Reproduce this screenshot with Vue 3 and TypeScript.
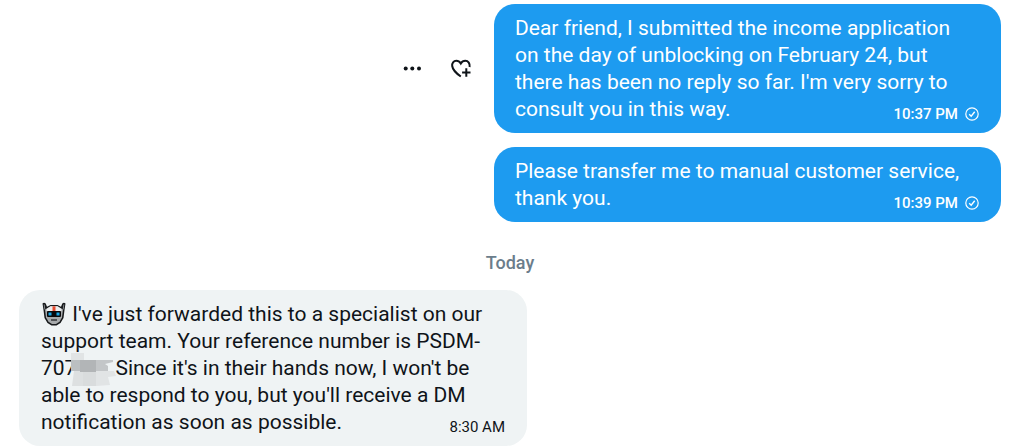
<script setup lang="ts">
interface Message {
  id: number
  lines: string[]
  time: string
  actions: boolean
}

const sent: Message[] = [
  {
    id: 1,
    lines: [
      'Dear friend, I submitted the income application',
      'on the day of unblocking on February 24, but',
      "there has been no reply so far. I'm very sorry to",
      'consult you in this way.',
    ],
    time: '10:37 PM',
    actions: true,
  },
  {
    id: 2,
    lines: ['Please transfer me to manual customer service,', 'thank you.'],
    time: '10:39 PM',
    actions: false,
  },
]
</script>

<template>
  <main class="chat">
    <div v-for="message in sent" :key="message.id" class="row sent">
      <div v-if="message.actions" class="actions">
        <button type="button" aria-label="More">
          <svg width="22" height="22" viewBox="0 0 22 22" fill="currentColor">
            <circle cx="4.7" cy="10.5" r="2" />
            <circle cx="11.3" cy="10.5" r="2" />
            <circle cx="18" cy="10.5" r="2" />
          </svg>
        </button>
        <button type="button" aria-label="Add reaction">
          <svg width="22" height="22" viewBox="0 0 22 22" fill="none" stroke="currentColor" stroke-width="2">
            <path d="M19.6 9C20.2 5.500 18.200 2.800 15.300 2.800c-2 0-3.500 1-4.500 2.800C9.700 3.800 8.300 2.800 6.300 2.800 3.600 2.800 1.800 5 2.200 8c.5 3.800 3.500 6.900 8.600 10.500" />
            <path d="M16.300 10.300v8.400M12.100 14.500h8.400" />
          </svg>
        </button>
      </div>
      <article class="bubble blue">
        <p><span v-for="line in message.lines" :key="line" class="line">{{ line }}</span></p>
        <footer>
          <time>{{ message.time }}</time>
          <svg class="check" width="14" height="14" viewBox="0 0 14 14" fill="none" stroke="currentColor" stroke-width="1.2">
            <circle cx="7" cy="7" r="6.2" />
            <path d="M4.2 7.2l2 2 3.5-4.4" stroke-width="1.4" />
          </svg>
        </footer>
      </article>
    </div>

    <h2 class="day">Today</h2>

    <div class="row">
      <article class="bubble grey">
        <p>
          <span class="line"><svg class="robot" width="24" height="24" viewBox="0 0 24 24" role="img" aria-label="Robot">
            <path d="M.5 1.500Q2 0 3.700 1.500L5 4.700 8.500 3h7L19 4.700 20.300 1.500Q22 0 23.500 1.500L22.500 8 21.500 16 18.500 21 14.500 23.500h-5L5.500 21 2.500 16 1.500 8z" fill="#17191b" />
            <path d="M3 7.500L8.500 4.300h7L21 7.500 20 15.500l-2.500 4.300-3.500 2.300h-4l-3.500-2.300L4 15.500z" fill="#a6a9ab" />
            <path d="M4.500 7L8.500 4.300h7L19.500 7v2h-15z" fill="#eceeef" />
            <path d="M10.500 4.300h3V9h-3z" fill="#e84c30" />
            <rect x="5" y="9" width="14" height="6" rx="1" fill="#08090a" />
            <path d="M6.500 10.500h3v3h-3zM14.500 10.500h3v3h-3z" fill="#18a8e8" />
            <path d="M2.200 2.500l.6 5M21.800 2.500l-.6 5" stroke="#808487" />
            <path d="M9 18h6" stroke="#333638" stroke-width="1.500" />
          </svg> I've just forwarded this to a specialist on our</span>
          <span class="line">support team. Your reference number is PSDM-</span>
          <span class="line">707<span class="redacted"><svg width="45" height="34" viewBox="0 0 45 34" aria-hidden="true">
            <path d="M0 0h13v7H0z" fill="#e1e4e5" />
            <path d="M3 18h11v7h-2v8H1z" fill="#dde0e1" />
            <path d="M12 18h13v15H12z" fill="#d9dcdd" />
            <path d="M25 18h18l2 5-8 1 2 8-14 1z" fill="#e1e4e5" />
            <path d="M0 7h9v11H0z" fill="#bbbfc1" />
            <path d="M9 7h16v12H9z" fill="#b2b5b7" />
            <path d="M25 7h17v2l-8 2 3 2v5H25z" fill="#c3c6c8" />
          </svg></span>Since it's in their hands now, I won't be</span>
          <span class="line">able to respond to you, but you'll receive a DM</span>
          <span class="line">notification as soon as possible.</span>
        </p>
        <footer><time>8:30 AM</time></footer>
      </article>
    </div>
  </main>
</template>

<style>
body {
  margin: 0;
  background: #fff;
}
</style>

<style scoped>
.chat {
  padding: 4px 19px 2px;
  color: #0f1419;
  font-family: Roboto, "Liberation Sans", sans-serif;
  font-size: 21px;
  line-height: 27px;
}
.row {
  display: flex;
  align-items: center;
}
.sent {
  justify-content: flex-end;
  margin-bottom: 14px;
}
.actions {
  display: flex;
  gap: 27px;
  margin-right: 22px;
}
button {
  display: flex;
  padding: 0;
  border: 0;
  background: none;
  color: #0f1419;
  cursor: pointer;
}
.bubble {
  position: relative;
  box-sizing: border-box;
  width: 507px;
  max-width: 100%;
  padding: 11px 21px 10px;
  border-radius: 21px;
}
.blue {
  background: #1d9bf0;
  color: #fff;
}
.blue footer {
  font-weight: 500;
}
.grey {
  width: 508px;
  padding-left: 22px;
  background: #eff3f4;
}
p {
  margin: 0;
}
.line {
  display: block;
}
footer {
  position: absolute;
  right: 22px;
  bottom: 9px;
  display: flex;
  align-items: center;
  gap: 7px;
  font-size: 15px;
  line-height: 20px;
}
.day {
  margin: 27px 0 13px;
  color: #6b7d8b;
  font-size: 18px;
  font-weight: 500;
  line-height: 28px;
  text-align: center;
}
.robot {
  margin: 0 1px;
  vertical-align: -5px;
}
.redacted {
  position: relative;
  display: inline-block;
  width: 39px;
  height: 20px;
  vertical-align: -3px;
}
.redacted svg {
  position: absolute;
  top: -5px;
  left: -5px;
}
</style>
